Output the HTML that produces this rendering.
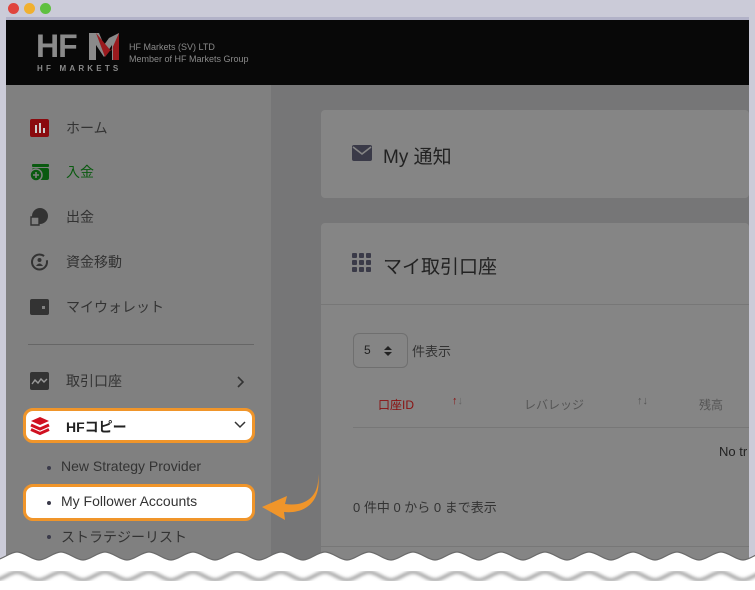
<!DOCTYPE html>
<html><head><meta charset="utf-8"><style>
*{margin:0;padding:0;box-sizing:border-box}
body{width:755px;height:590px;overflow:hidden;background:#cbcbd8;position:relative;font-family:"Liberation Sans","Noto Sans CJK JP",sans-serif}
.abs{position:absolute}
.dot{position:absolute;top:3px;width:11px;height:11px;border-radius:50%}
.side{left:6px;top:85px;width:265px;height:480px;background:#808080}
.main{left:271px;top:85px;width:478px;height:480px;background:#767677}
.card{background:#858585;border-radius:4px}
.nav{position:absolute;left:30px;font-size:14px;color:#333;display:flex;align-items:center}
.nav .ic{width:19px;height:18px;margin-right:17px;display:inline-block}
.sub{position:absolute;left:61px;font-size:14px;color:#333}
.sub:before{content:"";position:absolute;left:-14px;top:8px;width:4px;height:4px;border-radius:50%;background:#3a3a4a}
.hl{position:absolute;border:3px solid #f0952a;background:#fff;border-radius:10px}
</style></head><body>
<div class="dot" style="left:8px;background:#e0443e"></div>
<div class="dot" style="left:24px;background:#f0b030"></div>
<div class="dot" style="left:40px;background:#5fc040"></div>
<div class="abs" style="left:6px;top:17px;width:743px;height:3px;background:#b2b2c8"></div>
<div class="abs" style="left:6px;top:20px;width:743px;height:65px;background:#080808"></div>
<div class="abs" style="left:36px;top:30px;font-size:32px;font-weight:bold;color:#8a8a8a;letter-spacing:-1px;line-height:32px">HF</div>
<svg class="abs" style="left:89px;top:33px" width="30" height="27"><path d="M0 0 L10 0 L15 12 L20 5 L30 0 L30 27 L23 27 L23 12 L15 24 L7 12 L7 27 L0 27Z" fill="#8a8a8a"/><path d="M7 0 L22 18 L30 0 L30 27 L24 27 L24 14 L16 24 Z" fill="#9a1a1e"/></svg>
<div class="abs" style="left:37px;top:64px;font-size:8px;font-weight:bold;color:#8a8a8a;letter-spacing:3.2px">HF MARKETS</div>
<div class="abs" style="left:129px;top:41px;font-size:9px;color:#8a8a8a;line-height:12px">HF Markets (SV) LTD<br>Member of HF Markets Group</div>

<div class="abs side"></div>
<div class="abs main"></div>

<div class="nav" style="top:118px"><svg class="ic" viewBox="0 0 19 18"><rect width="19" height="18" rx="2" fill="#8a0a0e"/><rect x="5" y="6" width="2" height="8" fill="#ccc"/><rect x="9" y="4" width="2" height="10" fill="#ccc"/><rect x="13" y="9" width="2" height="5" fill="#ccc"/></svg>ホーム</div>
<div class="nav" style="top:162px;color:#0a5a10"><svg class="ic" viewBox="0 0 19 18"><rect x="2" y="1" width="17" height="3" rx="1" fill="#0a5a10"/><rect x="2" y="5" width="17" height="12" rx="2" fill="#0a5a10"/><circle cx="6" cy="12" r="6" fill="#0a5a10" stroke="#808080" stroke-width="1.5"/><path d="M6 9v6M3 12h6" stroke="#808080" stroke-width="1.6"/></svg>入金</div>
<div class="nav" style="top:207px"><svg class="ic" viewBox="0 0 19 18"><circle cx="10" cy="8" r="8" fill="#333"/><path d="M1 9h8v8H1z" fill="#808080" stroke="#333" stroke-width="1.4"/></svg>出金</div>
<div class="nav" style="top:252px"><svg class="ic" viewBox="0 0 19 18"><circle cx="9.5" cy="9" r="7.5" fill="none" stroke="#333" stroke-width="2" stroke-dasharray="40 5"/><circle cx="9.5" cy="7" r="2" fill="#333"/><path d="M6 13q3.5-5 7 0z" fill="#333"/></svg>資金移動</div>
<div class="nav" style="top:297px"><svg class="ic" viewBox="0 0 19 18"><rect y="1" width="19" height="16" rx="2" fill="#333"/><rect x="12" y="8" width="3" height="3" fill="#808080"/></svg>マイウォレット</div>
<div class="abs" style="left:28px;top:344px;width:226px;height:1px;background:#666"></div>
<div class="nav" style="top:371px"><svg class="ic" viewBox="0 0 19 18"><rect width="19" height="18" rx="2" fill="#333"/><path d="M2 12l3-4 3 3 3-4 3 3 3-3" stroke="#999" stroke-width="1.4" fill="none"/></svg>取引口座</div>
<svg class="abs" style="left:235px;top:376px" width="10" height="12"><path d="M3 1l5 5-5 5" stroke="#333" stroke-width="1.6" fill="none"/></svg>

<div class="hl" style="left:23px;top:408px;width:232px;height:35px"></div>
<svg class="abs" style="left:30px;top:416px" width="20" height="20" viewBox="0 0 20 20"><path d="M10 1l9 4-9 4-9-4z" fill="#d01020"/><path d="M1 9l9 4 9-4" stroke="#d01020" stroke-width="3" fill="none"/><path d="M1 13.5l9 4 9-4" stroke="#d01020" stroke-width="3" fill="none"/></svg>
<div class="abs" style="left:66px;top:417px;font-size:14px;color:#222;font-weight:bold">HFコピー</div>
<svg class="abs" style="left:234px;top:421px" width="12" height="8"><path d="M1 1l5 5 5-5" stroke="#333" stroke-width="1.5" fill="none"/></svg>

<div class="sub" style="top:458px">New Strategy Provider</div>
<div class="hl" style="left:23px;top:484px;width:232px;height:37px"></div>
<div class="sub" style="top:493px">My Follower Accounts</div>
<div class="sub" style="top:527px">ストラテジーリスト</div>
<svg class="abs" style="left:260px;top:472px" width="62" height="50"><path d="M58 2 C60 25 45 35 25 32 L27 24 L2 35 L25 48 L24 40 C45 42 62 30 58 2Z" fill="#f0952a"/></svg>

<div class="abs card" style="left:321px;top:110px;width:428px;height:88px"></div>
<svg class="abs" style="left:352px;top:145px" width="20" height="16"><rect width="20" height="16" rx="2" fill="#3a3a48"/><path d="M1 2l9 7 9-7" stroke="#858585" stroke-width="1.6" fill="none"/></svg>
<div class="abs" style="left:383px;top:142px;font-size:19px;color:#222">My 通知</div>

<div class="abs card" style="left:321px;top:223px;width:428px;height:342px"></div>
<svg class="abs" style="left:352px;top:253px" width="20" height="20"><g fill="#3a3a48"><rect x="0" y="0" width="5" height="5" rx="1"/><rect x="7" y="0" width="5" height="5" rx="1"/><rect x="14" y="0" width="5" height="5" rx="1"/><rect x="0" y="7" width="5" height="5" rx="1"/><rect x="7" y="7" width="5" height="5" rx="1"/><rect x="14" y="7" width="5" height="5" rx="1"/><rect x="0" y="14" width="5" height="5" rx="1"/><rect x="7" y="14" width="5" height="5" rx="1"/><rect x="14" y="14" width="5" height="5" rx="1"/></g></svg>
<div class="abs" style="left:383px;top:252px;font-size:19px;color:#222">マイ取引口座</div>
<div class="abs" style="left:321px;top:304px;width:428px;height:1px;background:#777"></div>
<div class="abs" style="left:353px;top:333px;width:55px;height:35px;border:1px solid #6f6f6f;border-radius:6px"></div>
<div class="abs" style="left:364px;top:343px;font-size:12px;color:#222">5</div>
<svg class="abs" style="left:384px;top:345px" width="8" height="12"><path d="M0 5L4 1L8 5ZM0 7L4 11L8 7Z" fill="#222"/></svg>
<div class="abs" style="left:412px;top:341px;font-size:13px;color:#333">件表示</div>
<div class="abs" style="left:378px;top:396px;font-size:12px;color:#8a1010">口座ID</div>
<div class="abs" style="left:452px;top:395px;font-size:11px;color:#8a1010">↑<span style="color:#666">↓</span></div>
<div class="abs" style="left:524px;top:396px;font-size:12px;color:#555">レバレッジ</div>
<div class="abs" style="left:637px;top:395px;font-size:11px;color:#555">↑↓</div>
<div class="abs" style="left:699px;top:396px;font-size:12px;color:#555">残高</div>
<div class="abs" style="left:353px;top:427px;width:396px;height:1px;background:#777"></div>
<div class="abs" style="left:719px;top:444px;font-size:13px;color:#222">No tr</div>
<div class="abs" style="left:353px;top:497px;font-size:13px;color:#333">0 件中 0 から 0 まで表示</div>
<div class="abs" style="left:321px;top:546px;width:428px;height:1px;background:#777"></div>

<svg class="abs" style="left:0;top:540px" width="755" height="50">
<defs><filter id="b"><feGaussianBlur stdDeviation="1.5"/></filter></defs>
<path d="M-5 20 c7.3 0 14.7 -8 22 -8 s14.7 8 22 8 s14.7 -8 22 -8 s14.7 8 22 8 s14.7 -8 22 -8 s14.7 8 22 8 s14.7 -8 22 -8 s14.7 8 22 8 s14.7 -8 22 -8 s14.7 8 22 8 s14.7 -8 22 -8 s14.7 8 22 8 s14.7 -8 22 -8 s14.7 8 22 8 s14.7 -8 22 -8 s14.7 8 22 8 s14.7 -8 22 -8 s14.7 8 22 8 s14.7 -8 22 -8 s14.7 8 22 8 s14.7 -8 22 -8 s14.7 8 22 8 s14.7 -8 22 -8 s14.7 8 22 8 s14.7 -8 22 -8 s14.7 8 22 8 s14.7 -8 22 -8 s14.7 8 22 8 s14.7 -8 22 -8 s14.7 8 22 8 s14.7 -8 22 -8 s14.7 8 22 8 s14.7 -8 22 -8 s14.7 8 22 8 s14.7 -8 22 -8 s14.7 8 22 8 L770 60 L-5 60Z" fill="#fff" stroke="#6a6a6a" stroke-width="1.2"/>
<path d="M-5 40 c7.3 0 14.7 -8 22 -8 s14.7 8 22 8 s14.7 -8 22 -8 s14.7 8 22 8 s14.7 -8 22 -8 s14.7 8 22 8 s14.7 -8 22 -8 s14.7 8 22 8 s14.7 -8 22 -8 s14.7 8 22 8 s14.7 -8 22 -8 s14.7 8 22 8 s14.7 -8 22 -8 s14.7 8 22 8 s14.7 -8 22 -8 s14.7 8 22 8 s14.7 -8 22 -8 s14.7 8 22 8 s14.7 -8 22 -8 s14.7 8 22 8 s14.7 -8 22 -8 s14.7 8 22 8 s14.7 -8 22 -8 s14.7 8 22 8 s14.7 -8 22 -8 s14.7 8 22 8 s14.7 -8 22 -8 s14.7 8 22 8 s14.7 -8 22 -8 s14.7 8 22 8 s14.7 -8 22 -8 s14.7 8 22 8 s14.7 -8 22 -8 s14.7 8 22 8 s14.7 -8 22 -8 s14.7 8 22 8" fill="none" stroke="#999" stroke-width="3" filter="url(#b)"/>
</svg>
</body></html>
